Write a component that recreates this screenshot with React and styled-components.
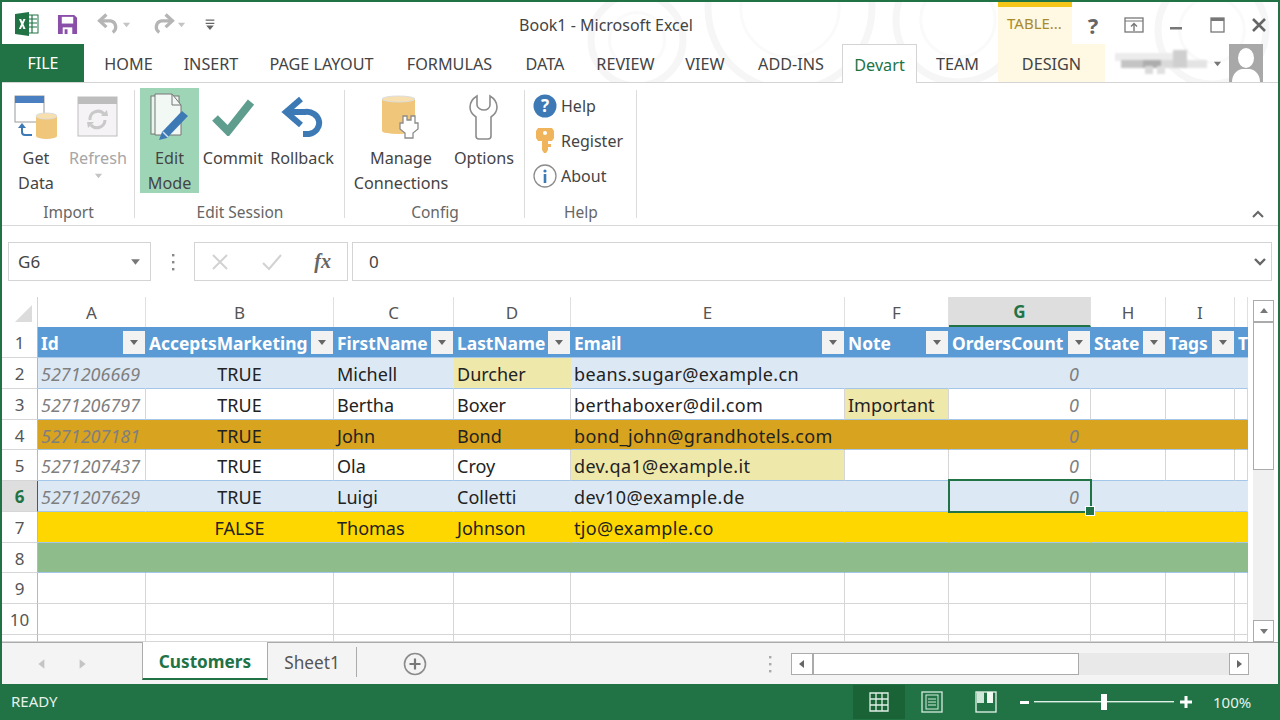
import styled, { createGlobalStyle } from "styled-components";

const GREEN = "#217346";
const UI_FONT = `"Noto Sans", "Open Sans", sans-serif`;

const GlobalStyle = createGlobalStyle`
  html, body { margin: 0; padding: 0; background: #fff; }
  * { box-sizing: border-box; }
`;

const columns = [
  { key: "A", w: 108 },
  { key: "B", w: 188 },
  { key: "C", w: 120 },
  { key: "D", w: 117 },
  { key: "E", w: 274 },
  { key: "F", w: 104 },
  { key: "G", w: 142 },
  { key: "H", w: 75 },
  { key: "I", w: 69 },
  { key: "", w: 13 },
];
const gridCols = "36px " + columns.map((c) => c.w + "px").join(" ");

const headers = ["Id", "AcceptsMarketing", "FirstName", "LastName", "Email", "Note", "OrdersCount", "State", "Tags", "T"];

const rows = [
  { n: 2, h: 31, tone: "band", id: "5271206669", ok: "TRUE", first: "Michell", last: "Durcher", lastHi: true, email: "beans.sugar@example.cn", count: "0" },
  { n: 3, h: 31, tone: "plain", id: "5271206797", ok: "TRUE", first: "Bertha", last: "Boxer", email: "berthaboxer@dil.com", note: "Important", count: "0" },
  { n: 4, h: 30, tone: "orange", id: "5271207181", ok: "TRUE", first: "John", last: "Bond", email: "bond_john@grandhotels.com", count: "0" },
  { n: 5, h: 31, tone: "plain", id: "5271207437", ok: "TRUE", first: "Ola", last: "Croy", email: "dev.qa1@example.it", emailHi: true, count: "0" },
  { n: 6, h: 31, tone: "band", id: "5271207629", ok: "TRUE", first: "Luigi", last: "Colletti", email: "dev10@example.de", count: "0", active: true },
  { n: 7, h: 31, tone: "gold", ok: "FALSE", first: "Thomas", last: "Johnson", email: "tjo@example.co" },
  { n: 8, h: 30, tone: "sage" },
  { n: 9, h: 31, tone: "empty" },
  { n: 10, h: 31, tone: "empty" },
];

const tones = {
  band: { bg: "#dce9f5", line: "#a4c6e8", vline: "transparent" },
  plain: { bg: "#ffffff", line: "#a4c6e8", vline: "#d6d6d6" },
  orange: { bg: "#d8a31f", line: "#a4c6e8", vline: "transparent" },
  gold: { bg: "#ffd700", line: "#a4c6e8", vline: "transparent" },
  sage: { bg: "#8fbc8b", line: "#a4c6e8", vline: "transparent" },
  empty: { bg: "#ffffff", line: "#d6d6d6", vline: "#d6d6d6" },
};

const tabs = [
  { label: "HOME", w: 81 },
  { label: "INSERT", w: 84 },
  { label: "PAGE LAYOUT", w: 137 },
  { label: "FORMULAS", w: 119 },
  { label: "DATA", w: 72 },
  { label: "REVIEW", w: 89 },
  { label: "VIEW", w: 70 },
  { label: "ADD-INS", w: 102 },
  { label: "Devart", w: 75, active: true },
  { label: "TEAM", w: 81 },
  { label: "DESIGN", w: 107, context: true },
];

const Window = styled.div`
  width: 1280px;
  height: 720px;
  display: flex;
  flex-direction: column;
  position: relative;
  overflow: hidden;
  background: #fff;
  border: 2px solid ${GREEN};
  border-bottom: 0;
  font-family: ${UI_FONT};
  color: #444;
`;

const Rings = styled.svg`
  position: absolute;
  left: -2px;
  top: -2px;
  pointer-events: none;
`;

const TitleBar = styled.div`
  height: 42px;
  display: grid;
  grid-template-columns: 230px 766px 74px 1fr;
  position: relative;
`;

const Qat = styled.div`
  display: flex;
  align-items: center;
  padding: 2px 0 0 13px;
`;

const Title = styled.div`
  display: flex;
  align-items: center;
  justify-content: center;
  padding: 3px 18px 0 0;
  font-size: 16px;
  color: #444;
`;

const TableTab = styled.div`
  background: #fff8e3;
  border-top: 5px solid #f5c518;
  color: #a98b2c;
  font-size: 15px;
  display: flex;
  align-items: center;
  padding: 0 0 5px 9px;
`;

const WinButtons = styled.div`
  display: grid;
  grid-template-columns: 42px 40px 44px 38px 46px;
`;

const WinButton = styled.div`
  display: flex;
  align-items: center;
  justify-content: center;
  padding-top: 4px;
  font-size: 22px;
  font-weight: 700;
  color: #666;
`;

const TabBar = styled.div`
  height: 39px;
  display: flex;
  position: relative;
  border-bottom: 1px solid #d4d4d4;
`;

const FileTab = styled.div`
  width: 82px;
  height: 38px;
  margin-right: 4px;
  background: ${GREEN};
  color: #fff;
  font-size: 16px;
  display: flex;
  align-items: center;
  justify-content: center;
`;

const Tab = styled.div`
  width: ${(p) => p.$w}px;
  height: ${(p) => (p.$active ? "39px" : "38px")};
  padding-top: 2px;
  display: flex;
  align-items: center;
  justify-content: center;
  font-size: 16.2px;
  color: ${(p) => (p.$active ? GREEN : "#444")};
  background: ${(p) => (p.$active ? "#fff" : p.$context ? "#fff8e3" : "transparent")};
  border: ${(p) => (p.$active ? "1px solid #d4d4d4" : "0")};
  border-bottom: 0;
`;

const Account = styled.div`
  margin-left: 10px;
  display: flex;
  align-items: center;
  gap: 4px;
`;

const Avatar = styled.div`
  margin-left: 7px;
  width: 34px;
  height: 38px;
  overflow: hidden;
  background: #aaa;
`;

const Ribbon = styled.div`
  height: 143px;
  display: flex;
  border-bottom: 1px solid #d8d8d8;
`;

const Group = styled.div`
  width: ${(p) => p.$w}px;
  padding: 5px 0 0 ${(p) => p.$pad}px;
  display: flex;
  flex-direction: column;
  position: relative;
  &::after {
    content: "";
    position: absolute;
    right: 0;
    top: 7px;
    bottom: 7px;
    width: 1px;
    background: #dcdcdc;
  }
`;

const GroupBody = styled.div`
  height: 105px;
  display: flex;
`;

const GroupLabel = styled.div`
  margin-top: 7px;
  margin-left: ${(p) => -p.$pad}px;
  height: 24px;
  line-height: 24px;
  text-align: center;
  font-size: 15.5px;
  color: #666;
`;

const BigButton = styled.div`
  width: ${(p) => p.$w}px;
  height: 105px;
  background: ${(p) => (p.$on ? "#9fd5b7" : "transparent")};
  color: ${(p) => (p.$off ? "#a6a6a6" : "#444")};
  display: flex;
  flex-direction: column;
  align-items: center;
`;

const IconZone = styled.div`
  height: 58px;
  flex: none;
  display: flex;
  align-items: center;
  justify-content: center;
`;

const BigLabel = styled.div`
  font-size: 16.2px;
  line-height: 25px;
  text-align: center;
  white-space: nowrap;
`;

const Stack = styled.div`
  display: flex;
  flex-direction: column;
  padding-left: 8px;
`;

const SmallButton = styled.div`
  height: 35px;
  display: flex;
  align-items: center;
  gap: 4px;
  font-size: 16px;
  color: #444;
`;

const SmallIcon = styled.div`
  width: 24px;
  display: flex;
  justify-content: center;
`;

const Collapse = styled.div`
  margin-left: auto;
  align-self: flex-end;
  padding: 0 13px 6px 0;
  display: flex;
`;

const FormulaBar = styled.div`
  height: 39px;
  margin: 16px 6px 0 6px;
  display: flex;
  font-size: 17px;
  color: #444;
`;

const NameBox = styled.div`
  width: 143px;
  border: 1px solid #d4d4d4;
  padding: 0 9px;
  display: flex;
  align-items: center;
  justify-content: space-between;
`;

const BarDots = styled.div`
  width: 43px;
  display: flex;
  align-items: center;
  justify-content: center;
`;

const FxBox = styled.div`
  width: 154px;
  border: 1px solid #d4d4d4;
  padding: 0 16px 0 16px;
  display: flex;
  align-items: center;
  justify-content: space-between;
`;

const FxText = styled.span`
  font-family: "Liberation Serif", serif;
  font-style: italic;
  font-weight: 700;
  font-size: 20px;
  color: #666;
`;

const FormulaInput = styled.div`
  flex: 1;
  margin-left: 4px;
  border: 1px solid #d4d4d4;
  padding: 0 4px 0 16px;
  display: flex;
  align-items: center;
  justify-content: space-between;
`;

const SheetArea = styled.div`
  height: 345px;
  margin-top: 16px;
  display: flex;
`;

const Sheet = styled.div`
  width: 1246px;
  height: 345px;
  overflow: hidden;
`;

const Row = styled.div`
  display: grid;
  grid-template-columns: ${gridCols};
  height: ${(p) => p.$h}px;
`;

const CornerCell = styled.div`
  background: #fff;
  border-right: 1px solid #d4d4d4;
  display: flex;
  align-items: flex-end;
  justify-content: flex-end;
  padding: 0 5px 5px 0;
`;

const ColHead = styled.div`
  border-right: 1px solid #e0e0e0;
  display: flex;
  align-items: center;
  justify-content: center;
  font-size: 17px;
  color: #555;
  background: ${(p) => (p.$active ? "#dedede" : "#fff")};
  ${(p) => p.$active && `color: ${GREEN}; font-weight: 700; border-bottom: 2px solid ${GREEN};`}
`;

const RowHead = styled.div`
  display: flex;
  align-items: center;
  justify-content: center;
  padding-top: 1px;
  font-size: 17px;
  color: ${(p) => (p.$active ? GREEN : "#555")};
  font-weight: ${(p) => (p.$active ? 700 : 400)};
  background: ${(p) => (p.$active ? "#dedede" : "#fff")};
  border-right: 1px solid ${(p) => (p.$active ? GREEN : "#b8b8b8")};
  border-bottom: 1px solid #d6d6d6;
`;

const HeadCell = styled.div`
  background: #5b9bd5;
  color: #fff;
  font-size: 17.4px;
  font-weight: 700;
  padding: 2px 0 0 3px;
  display: flex;
  align-items: center;
  overflow: hidden;
  white-space: nowrap;
  border-bottom: 1px solid #a4c6e8;
`;

const FilterButton = styled.div`
  margin: -2px 1px 0 auto;
  flex: none;
  width: 22px;
  height: 23px;
  background: #f2f2f2;
  display: flex;
  align-items: center;
  justify-content: center;
`;

const Cell = styled.div`
  position: relative;
  background: ${(p) => (p.$hi ? "#eee8aa" : tones[p.$tone].bg)};
  border-right: 1px solid ${(p) => tones[p.$tone].vline};
  border-bottom: 1px solid ${(p) => tones[p.$tone].line};
  padding: 2px ${(p) => (p.$right ? 11 : 3)}px 0 3px;
  display: flex;
  align-items: center;
  justify-content: ${(p) => (p.$right ? "flex-end" : p.$center ? "center" : "flex-start")};
  font-size: 18px;
  letter-spacing: ${(p) => (p.$wide ? "0.36px" : "normal")};
  white-space: nowrap;
  overflow: ${(p) => (p.$selected ? "visible" : "hidden")};
  color: ${(p) => (p.$dim ? "#7f7f7f" : "#222")};
  font-style: ${(p) => (p.$dim ? "italic" : "normal")};
`;

const Selection = styled.div`
  position: absolute;
  inset: -2px -2px -2px -1px;
  border: 2px solid ${GREEN};
  z-index: 2;
  &::after {
    content: "";
    position: absolute;
    right: -5px;
    bottom: -5px;
    width: 8px;
    height: 8px;
    background: ${GREEN};
    border: 1px solid #fff;
  }
`;

const VScroll = styled.div`
  margin-left: 5px;
  width: 21px;
  display: flex;
  flex-direction: column;
  background: #f0f0f0;
`;

const ScrollButton = styled.div`
  width: ${(p) => p.$w || 21}px;
  height: ${(p) => p.$h || 22}px;
  flex: none;
  margin-left: ${(p) => (p.$push ? "auto" : "0")};
  background: #fff;
  border: 1px solid #ababab;
  display: flex;
  align-items: center;
  justify-content: center;
`;

const VThumb = styled.div`
  height: 148px;
  background: #fff;
  border: 1px solid #ababab;
`;

const VTrack = styled.div`
  flex: 1;
`;

const VTop = styled.div`
  height: 3px;
  background: #fff;
  flex: none;
`;

const SheetTabs = styled.div`
  height: 42px;
  display: flex;
  align-items: stretch;
  background: #f4f4f4;
  border-top: 1px solid #ababab;
`;

const TabNav = styled.div`
  width: 140px;
  display: flex;
  align-items: center;
  padding-left: 34px;
  gap: 28px;
`;

const ActiveSheet = styled.div`
  width: 126px;
  margin-top: -1px;
  height: 38px;
  padding-top: 2px;
  background: #fff;
  border-left: 1px solid #ababab;
  border-right: 1px solid #ababab;
  border-bottom: 2px solid ${GREEN};
  color: ${GREEN};
  font-size: 17.2px;
  font-weight: 700;
  display: flex;
  align-items: center;
  justify-content: center;
`;

const SheetTab = styled.div`
  width: 89px;
  height: 30px;
  margin-top: 4px;
  border-right: 1px solid #ababab;
  font-size: 17.2px;
  color: #555;
  display: flex;
  align-items: center;
  justify-content: center;
`;

const AddSheet = styled.div`
  width: 116px;
  display: flex;
  align-items: center;
  justify-content: center;
`;

const TabDots = styled.div`
  margin-left: auto;
  width: 23px;
  display: flex;
  align-items: center;
`;

const HScroll = styled.div`
  width: 458px;
  height: 22px;
  margin: 10px 29px 0 0;
  display: flex;
  background: #e9e9e9;
`;

const HThumb = styled.div`
  width: 266px;
  background: #fff;
  border: 1px solid #ababab;
`;

const StatusBar = styled.div`
  height: 36px;
  margin: 0 -2px;
  background: ${GREEN};
  color: #fff;
  display: flex;
  align-items: center;
  padding-left: 11px;
  font-size: 15px;
`;

const StatusText = styled.div`
  color: #e6f1ea;
  width: 842px;
  margin-top: -2px;
`;

const ViewButton = styled.div`
  width: ${(p) => (p.$on ? 52 : 54)}px;
  height: 34px;
  display: flex;
  align-items: center;
  justify-content: center;
  background: ${(p) => (p.$on ? "#1a6336" : "transparent")};
`;

const ZoomSlider = styled.div`
  display: flex;
  align-items: center;
  margin-left: 7px;
`;

const ZoomPercent = styled.div`
  margin-left: 17px;
  color: #e6f1ea;
`;

const Spacer = styled.div`
  width: ${(p) => p.$w}px;
  flex: none;
`;

const Arrow = ({ dir = "down", color = "#777", size = 10 }) => {
  const pts = {
    down: "1,3 9,3 5,8",
    up: "1,7 9,7 5,2",
    left: "7,1 7,9 2,5",
    right: "3,1 3,9 8,5",
  };
  return (
    <svg width={size} height={size} viewBox="0 0 10 10">
      <polygon points={pts[dir]} fill={color} />
    </svg>
  );
};

const ExcelLogo = () => (
  <svg width="24" height="24" viewBox="0 0 24 24">
    <rect x="9" y="3" width="14" height="18" fill="#fff" stroke="#217346" />
    <path d="M12 7h10M12 11h10M12 15h10M17 3v18" stroke="#217346" strokeWidth="1.2" />
    <path d="M0 2l14-2v24L0 22z" fill="#217346" />
    <path d="M4 7l2.2 0 1 2.8L8.4 7h2.1L8.4 12l2.2 5H8.4l-1.2-3-1.2 3H3.9l2.2-5z" fill="#fff" />
  </svg>
);

const SaveIcon = () => (
  <svg width="21" height="21" viewBox="0 0 22 22">
    <path d="M1 1h17l3 3v17H1z" fill="#8a4fa8" />
    <rect x="5" y="3" width="12" height="7" fill="#fff" />
    <rect x="6" y="14" width="10" height="7" fill="#fff" />
    <rect x="8" y="16" width="3" height="5" fill="#8a4fa8" />
  </svg>
);

const UndoArrow = ({ flip }) => (
  <svg width="23" height="22" viewBox="0 0 22 20" style={flip ? { transform: "scaleX(-1)" } : undefined}>
    <path d="M3 7h10a6 6 0 0 1 2 11" fill="none" stroke="#b5b5b5" strokeWidth="3.2" />
    <path d="M9 1L2.5 7 9 13" fill="none" stroke="#b5b5b5" strokeWidth="3.2" />
  </svg>
);

const QatMore = () => (
  <svg width="12" height="13" viewBox="0 0 10 12">
    <path d="M1 2h8M1 5h8" stroke="#666" strokeWidth="1.3" />
    <polygon points="1.5,7 8.5,7 5,11" fill="#666" />
  </svg>
);

const Cylinder = ({ x, y, w, h }) => (
  <g>
    <rect x={x} y={y + 3} width={w} height={h - 6} fill="#f0c67a" />
    <ellipse cx={x + w / 2} cy={y + h - 3} rx={w / 2} ry="3" fill="#f0c67a" />
    <ellipse cx={x + w / 2} cy={y + 3} rx={w / 2} ry="3" fill="#f7dfae" stroke="#ddd" />
  </g>
);

const GetDataIcon = () => (
  <svg width="44" height="44" viewBox="0 0 44 44">
    <rect x="1" y="1" width="29" height="26" fill="#fff" stroke="#9a9a9a" />
    <rect x="1" y="1" width="29" height="7" fill="#4a7fc1" />
    <Cylinder x={22} y={18} w={21} h={26} />
    <path d="M8 33v4a3 3 0 0 0 3 3h7" fill="none" stroke="#3d7ab5" strokeWidth="2" />
    <polygon points="4,33 12,33 8,28" fill="#3d7ab5" />
  </svg>
);

const RefreshIcon = () => (
  <svg width="42" height="42" viewBox="0 0 42 42">
    <rect x="1" y="1" width="39" height="39" fill="#f6f3f6" stroke="#bdbdbd" />
    <rect x="1" y="1" width="39" height="7" fill="#bdbdbd" />
    <path d="M13 24a8 8 0 0 1 14-6M28 24a8 8 0 0 1-14 5" fill="none" stroke="#c9c9c9" strokeWidth="3" />
    <polygon points="24,20 31,20 30,14" fill="#c9c9c9" />
    <polygon points="10,26 17,26 11,32" fill="#c9c9c9" />
  </svg>
);

const EditIcon = () => (
  <svg width="40" height="48" viewBox="0 0 40 48">
    <rect x="1" y="3" width="28" height="38" fill="#e8f4ec" stroke="#777" />
    <path d="M5 1h17l9 11v30H5z" fill="#f2f8f4" stroke="#777" />
    <path d="M22 1v11h9" fill="none" stroke="#777" />
    <path d="M32 18l6 5-21 22-8 2 3-8z" fill="#3d7ab5" />
    <path d="M13 39l5 5" stroke="#cfe0ef" strokeWidth="1.5" />
  </svg>
);

const CommitIcon = () => (
  <svg width="42" height="38" viewBox="0 0 42 38">
    <path d="M3 20l13 13L39 4" fill="none" stroke="#5f9e8f" strokeWidth="8" />
  </svg>
);

const RollbackIcon = () => (
  <svg width="42" height="42" viewBox="0 0 42 42">
    <path d="M6 16h18a12 11 0 0 1 4 22h-6" fill="none" stroke="#3d7ab5" strokeWidth="6" />
    <path d="M20 3L5 16l15 13" fill="none" stroke="#3d7ab5" strokeWidth="6" />
  </svg>
);

const ConnectionsIcon = () => (
  <svg width="42" height="44" viewBox="0 0 42 44">
    <Cylinder x={2} y={1} w={33} h={38} />
    <path d="M23 28v-7h4v4h4v-4h4v7h3v6l-5 4v5h-8v-5l-5-4v-6z" fill="#fff" stroke="#8c8c8c" strokeWidth="1.3" />
  </svg>
);

const WrenchIcon = () => (
  <svg width="30" height="46" viewBox="0 0 30 46">
    <path d="M8 2C3 5 1 9 1 13c0 5 3 8 6 10v19c0 3 2 3 3 3h9c2 0 3-1 3-3V23c3-2 6-5 6-10 0-4-2-8-7-11v9c0 3-3 5-6 5s-7-2-7-5z" fill="#fff" stroke="#8c8c8c" strokeWidth="1.6" />
  </svg>
);

const HelpIcon = () => (
  <svg width="24" height="24" viewBox="0 0 24 24">
    <circle cx="12" cy="12" r="11.5" fill="#3d7ab5" />
    <text x="12" y="18" textAnchor="middle" fontSize="17" fontWeight="700" fill="#fff" fontFamily="Noto Sans, sans-serif">?</text>
  </svg>
);

const KeyIcon = () => (
  <svg width="18" height="26" viewBox="0 0 18 26">
    <path d="M2 0h14l2 3v7l-2 3h-4v3h3v3h-3v3l-2 3H8l-2-3V13H2l-2-3V3z" fill="#f0b55c" />
    <circle cx="9" cy="5" r="2" fill="#fff" />
  </svg>
);

const InfoIcon = () => (
  <svg width="24" height="24" viewBox="0 0 24 24">
    <circle cx="12" cy="12" r="11" fill="#fff" stroke="#8c8c8c" strokeWidth="1.3" />
    <circle cx="12" cy="7" r="1.6" fill="#3d7ab5" />
    <rect x="10.7" y="10" width="2.6" height="9" fill="#3d7ab5" />
  </svg>
);

const ChevronUp = () => (
  <svg width="14" height="10" viewBox="0 0 14 10">
    <path d="M2 8l5-5 5 5" fill="none" stroke="#666" strokeWidth="2" />
  </svg>
);

const ChevronDown = () => (
  <svg width="14" height="10" viewBox="0 0 14 10">
    <path d="M2 2l5 5 5-5" fill="none" stroke="#666" strokeWidth="2.4" />
  </svg>
);

const RestoreIcon = () => (
  <svg width="20" height="16" viewBox="0 0 20 16">
    <rect x="1" y="1" width="18" height="14" fill="none" stroke="#777" strokeWidth="1.3" />
    <path d="M1 4h18" stroke="#777" />
    <path d="M10 14V7M7 9.5L10 6.5l3 3" fill="none" stroke="#777" strokeWidth="1.4" />
  </svg>
);

const MinIcon = () => (
  <svg width="14" height="14" viewBox="0 0 14 14">
    <rect x="1" y="9" width="12" height="2.5" fill="#777" />
  </svg>
);

const MaxIcon = () => (
  <svg width="15" height="16" viewBox="0 0 15 16">
    <rect x="1" y="1" width="13" height="14" fill="none" stroke="#777" strokeWidth="1.3" />
    <rect x="1" y="1" width="13" height="3" fill="#777" />
  </svg>
);

const CloseIcon = () => (
  <svg width="16" height="16" viewBox="0 0 16 16">
    <path d="M2 2l12 12M14 2L2 14" stroke="#666" strokeWidth="2.6" />
  </svg>
);

// the account name is pixelated out in the screenshot
const BlurName = () => (
  <svg width="94" height="26" viewBox="0 0 94 26" style={{ filter: "blur(1.2px)" }}>
    <rect x="0" y="3" width="60" height="8" fill="#ececec" />
    <rect x="6" y="10" width="30" height="8" fill="#c4c4c4" />
    <rect x="28" y="10" width="18" height="8" fill="#adadad" />
    <rect x="46" y="10" width="26" height="8" fill="#dadada" />
    <rect x="30" y="16" width="8" height="8" fill="#dadada" />
    <rect x="42" y="16" width="8" height="8" fill="#e0e0e0" />
    <rect x="58" y="0" width="14" height="18" fill="#cfcfcf" />
    <rect x="72" y="10" width="20" height="8" fill="#e4e4e4" />
  </svg>
);

const AvatarIcon = () => (
  <svg width="34" height="38" viewBox="0 0 34 38">
    <rect width="34" height="38" fill="#a8a8a8" />
    <ellipse cx="17" cy="14" rx="8" ry="10" fill="#fff" />
    <path d="M3 38c0-8 5-12 10-13h8c5 1 10 5 10 13z" fill="#fff" />
  </svg>
);

const Corner = () => (
  <svg width="17" height="17" viewBox="0 0 17 17">
    <polygon points="0,17 17,17 17,0" fill="#dcdcdc" />
  </svg>
);

const Dots = ({ color = "#888" }) => (
  <svg width="4" height="18" viewBox="0 0 4 18">
    <rect x="1" y="1" width="2.4" height="2.4" fill={color} />
    <rect x="1" y="8" width="2.4" height="2.4" fill={color} />
    <rect x="1" y="15" width="2.4" height="2.4" fill={color} />
  </svg>
);

const GridIcon = () => (
  <svg width="20" height="20" viewBox="0 0 20 20">
    <path d="M1 1h18v18H1zM7 1v18M13 1v18M1 7h18M1 13h18" fill="none" stroke="#dff0e6" strokeWidth="1.3" />
  </svg>
);

const PageIcon = () => (
  <svg width="22" height="22" viewBox="0 0 22 22">
    <rect x="1" y="1" width="20" height="20" fill="none" stroke="#d4ebdd" strokeWidth="1.3" />
    <rect x="5" y="4" width="12" height="14" fill="none" stroke="#d4ebdd" />
    <path d="M7 8h8M7 11h8M7 14h8" stroke="#d4ebdd" />
  </svg>
);

const BreakIcon = () => (
  <svg width="22" height="22" viewBox="0 0 22 22">
    <rect x="1" y="1" width="20" height="20" fill="none" stroke="#e8f4ec" strokeWidth="1.3" />
    <rect x="2" y="1" width="7" height="11" fill="#cfe6d8" />
    <rect x="12" y="1" width="6" height="11" fill="#f2f9f5" />
  </svg>
);

const Slider = () => (
  <svg width="176" height="20" viewBox="0 0 176 20">
    <rect x="0" y="9" width="9" height="3" fill="#fff" />
    <rect x="14" y="9" width="140" height="1.4" fill="#dff0e6" />
    <rect x="81" y="2" width="6" height="16" fill="#fff" />
    <path d="M166 4v12M160 10h12" stroke="#fff" strokeWidth="3" />
  </svg>
);

const PlusCircle = () => (
  <svg width="24" height="24" viewBox="0 0 24 24">
    <circle cx="12" cy="12" r="10.5" fill="none" stroke="#8c8c8c" strokeWidth="1.6" />
    <path d="M12 6.5v11M6.5 12h11" stroke="#777" strokeWidth="2.2" />
  </svg>
);

const XMark = () => (
  <svg width="18" height="18" viewBox="0 0 18 18">
    <path d="M2 2l14 14M16 2L2 16" stroke="#d2d2d2" strokeWidth="2" />
  </svg>
);

const CheckMark = () => (
  <svg width="20" height="18" viewBox="0 0 20 18">
    <path d="M1 10l6 6L19 2" fill="none" stroke="#d2d2d2" strokeWidth="2" />
  </svg>
);

const App = () => (
  <>
    <GlobalStyle />
    <Window>
      <Rings width="1280" height="82" viewBox="0 0 1280 82">
        {[
          [637, 40, 46],
          [790, 8, 82],
          [958, 20, 62],
          [1212, 30, 54],
        ].map(([cx, cy, r]) => (
          <g key={cx} fill="none">
            <circle cx={cx} cy={cy} r={r} strokeWidth="7" stroke="#f6f6f6" />
            <circle cx={cx} cy={cy} r={r * 0.6} strokeWidth="3" stroke="#fafafa" />
          </g>
        ))}
      </Rings>

      <TitleBar>
        <Qat>
          <ExcelLogo />
          <Spacer $w={18} />
          <SaveIcon />
          <Spacer $w={19} />
          <UndoArrow />
          <Spacer $w={2} />
          <Arrow color="#c4c4c4" size={9} />
          <Spacer $w={21} />
          <UndoArrow flip />
          <Spacer $w={2} />
          <Arrow color="#c4c4c4" size={9} />
          <Spacer $w={18} />
          <QatMore />
        </Qat>
        <Title>Book1 - Microsoft Excel</Title>
        <TableTab>TABLE...</TableTab>
        <WinButtons>
          <WinButton>?</WinButton>
          <WinButton><RestoreIcon /></WinButton>
          <WinButton><MinIcon /></WinButton>
          <WinButton><MaxIcon /></WinButton>
          <WinButton><CloseIcon /></WinButton>
        </WinButtons>
      </TitleBar>

      <TabBar>
        <FileTab>FILE</FileTab>
        {tabs.map((t) => (
          <Tab key={t.label} $w={t.w} $active={t.active} $context={t.context}>
            {t.label}
          </Tab>
        ))}
        <Account>
          <BlurName />
          <Arrow size={9} />
        </Account>
        <Avatar><AvatarIcon /></Avatar>
      </TabBar>

      <Ribbon>
        <Group $w={133} $pad={6}>
          <GroupBody>
            <BigButton $w={56}>
              <IconZone><GetDataIcon /></IconZone>
              <BigLabel>Get<br />Data</BigLabel>
            </BigButton>
            <Spacer $w={4} />
            <BigButton $w={60} $off>
              <IconZone><RefreshIcon /></IconZone>
              <BigLabel>Refresh</BigLabel>
              <Arrow color="#c4c4c4" size={9} />
            </BigButton>
          </GroupBody>
          <GroupLabel $pad={6}>Import</GroupLabel>
        </Group>
        <Group $w={210} $pad={5}>
          <GroupBody>
            <BigButton $w={59} $on>
              <IconZone><EditIcon /></IconZone>
              <BigLabel>Edit<br />Mode</BigLabel>
            </BigButton>
            <BigButton $w={68}>
              <IconZone><CommitIcon /></IconZone>
              <BigLabel>Commit</BigLabel>
            </BigButton>
            <BigButton $w={70}>
              <IconZone><RollbackIcon /></IconZone>
              <BigLabel>Rollback</BigLabel>
            </BigButton>
          </GroupBody>
          <GroupLabel $pad={5}>Edit Session</GroupLabel>
        </Group>
        <Group $w={180} $pad={6}>
          <GroupBody>
            <BigButton $w={100}>
              <IconZone><ConnectionsIcon /></IconZone>
              <BigLabel>Manage<br />Connections</BigLabel>
            </BigButton>
            <BigButton $w={66}>
              <IconZone><WrenchIcon /></IconZone>
              <BigLabel>Options</BigLabel>
            </BigButton>
          </GroupBody>
          <GroupLabel $pad={6}>Config</GroupLabel>
        </Group>
        <Group $w={112} $pad={0}>
          <GroupBody>
            <Stack>
              <SmallButton><SmallIcon><HelpIcon /></SmallIcon>Help</SmallButton>
              <SmallButton><SmallIcon><KeyIcon /></SmallIcon>Register</SmallButton>
              <SmallButton><SmallIcon><InfoIcon /></SmallIcon>About</SmallButton>
            </Stack>
          </GroupBody>
          <GroupLabel $pad={0}>Help</GroupLabel>
        </Group>
        <Collapse><ChevronUp /></Collapse>
      </Ribbon>

      <FormulaBar>
        <NameBox>G6<Arrow size={11} /></NameBox>
        <BarDots><Dots /></BarDots>
        <FxBox><XMark /><CheckMark /><FxText>fx</FxText></FxBox>
        <FormulaInput>0<ChevronDown /></FormulaInput>
      </FormulaBar>

      <SheetArea>
        <Sheet>
          <Row $h={30}>
            <CornerCell><Corner /></CornerCell>
            {columns.map((c) => (
              <ColHead key={c.w + c.key} $active={c.key === "G"}>{c.key}</ColHead>
            ))}
          </Row>
          <Row $h={31}>
            <RowHead>1</RowHead>
            {headers.map((h) => (
              <HeadCell key={h}>
                {h}
                {h !== "T" && <FilterButton><Arrow size={10} color="#666" /></FilterButton>}
              </HeadCell>
            ))}
          </Row>
          {rows.map((r) => (
            <Row key={r.n} $h={r.h}>
              <RowHead $active={r.active}>{r.n}</RowHead>
              <Cell $tone={r.tone} $dim>{r.id}</Cell>
              <Cell $tone={r.tone} $center>{r.ok}</Cell>
              <Cell $tone={r.tone}>{r.first}</Cell>
              <Cell $tone={r.tone} $hi={r.lastHi}>{r.last}</Cell>
              <Cell $tone={r.tone} $hi={r.emailHi} $wide>{r.email}</Cell>
              <Cell $tone={r.tone} $hi={!!r.note}>{r.note}</Cell>
              <Cell $tone={r.tone} $dim $right $selected={r.active}>
                {r.count}
                {r.active && <Selection />}
              </Cell>
              <Cell $tone={r.tone} />
              <Cell $tone={r.tone} />
              <Cell $tone={r.tone} />
            </Row>
          ))}
          <Row $h={7}>
            <RowHead />
            {columns.map((c) => (
              <Cell key={c.w + c.key} $tone="empty" />
            ))}
          </Row>
        </Sheet>
        <VScroll>
          <VTop />
          <ScrollButton><Arrow dir="up" /></ScrollButton>
          <VThumb />
          <VTrack />
          <ScrollButton><Arrow /></ScrollButton>
        </VScroll>
      </SheetArea>

      <SheetTabs>
        <TabNav>
          <Arrow dir="left" color="#c4c4c4" size={12} />
          <Arrow dir="right" color="#c4c4c4" size={12} />
        </TabNav>
        <ActiveSheet>Customers</ActiveSheet>
        <SheetTab>Sheet1</SheetTab>
        <AddSheet><PlusCircle /></AddSheet>
        <TabDots><Dots color="#aaa" /></TabDots>
        <HScroll>
          <ScrollButton $w={22}><Arrow dir="left" color="#666" /></ScrollButton>
          <HThumb />
          <ScrollButton $w={20} $push><Arrow dir="right" color="#666" /></ScrollButton>
        </HScroll>
      </SheetTabs>

      <StatusBar>
        <StatusText>READY</StatusText>
        <ViewButton $on><GridIcon /></ViewButton>
        <ViewButton><PageIcon /></ViewButton>
        <ViewButton><BreakIcon /></ViewButton>
        <ZoomSlider><Slider /></ZoomSlider>
        <ZoomPercent>100%</ZoomPercent>
      </StatusBar>
    </Window>
  </>
);

export default App;
